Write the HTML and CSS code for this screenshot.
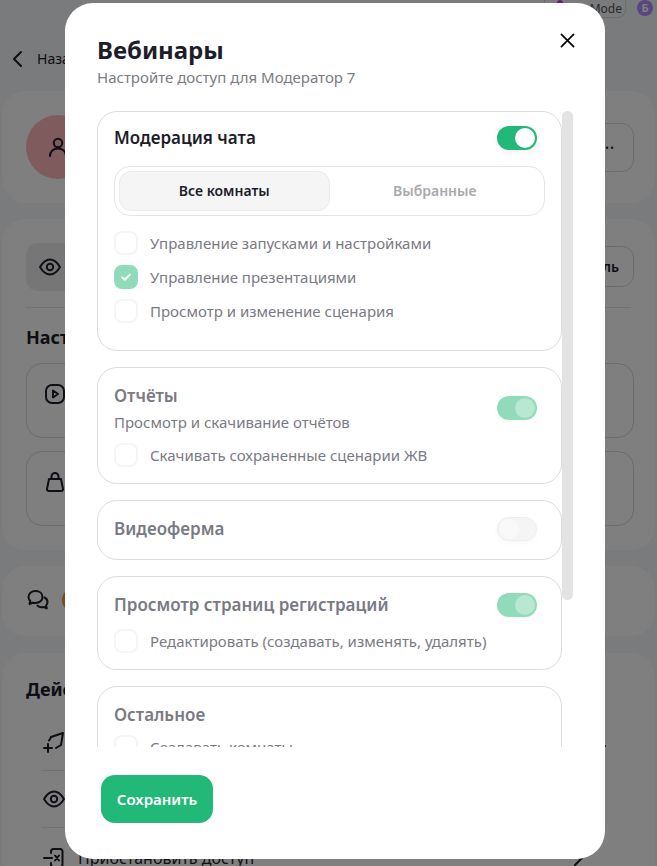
FILE: index.html
```html
<!DOCTYPE html>
<html lang="ru">
<head>
    <meta charset="UTF-8">
    <meta name="viewport" content="width=device-width, initial-scale=1.0">
    <title>Вебинары</title>
    <link rel="stylesheet" href="styles.css">
</head>
<body>
    <!-- Page behind the dialog -->
    <div class="page">
        <div class="topbar">
            <span class="mode-pill"><span class="mode-dot"></span>Mode</span>
            <span class="user-badge">Б</span>
        </div>
        <div class="back-row">
            <svg class="icon" viewBox="0 0 24 24"><path d="M15 5l-7 7 7 7"/></svg>
            <span>Назад</span>
        </div>

        <section class="bg-card bg-card-user">
            <div class="avatar">
                <svg class="icon" viewBox="0 0 24 24"><circle cx="12" cy="8" r="4.2"/><path d="M4 21c0-4.5 3.5-7.5 8-7.5s8 3 8 7.5"/></svg>
            </div>
            <button class="bg-btn bg-btn-more">•••</button>
        </section>

        <section class="bg-card">
            <div class="view-row">
                <div class="icon-tile">
                    <svg class="icon" viewBox="0 0 24 24"><path d="M2 12c3-5 6-7.5 10-7.5S19 7 22 12c-3 5-6 7.5-10 7.5S5 17 2 12z"/><circle cx="12" cy="12" r="3.2"/></svg>
                </div>
                <button class="bg-btn bg-btn-view">Просмотреть как пользователь</button>
            </div>
            <h2 class="bg-title bg-title-access">Настройки доступа</h2>
            <div class="bg-cell">
                <svg class="icon" viewBox="0 0 24 24"><rect x="3" y="3" width="18" height="18" rx="6"/><path d="M10 8.5l5 3.5-5 3.5z"/></svg>
                <span class="cell-dot"></span>
            </div>
            <div class="bg-cell">
                <svg class="icon" viewBox="0 0 24 24"><path d="M6 9h12l2 10c.2 1.2-.6 2-1.6 2H5.600c-1 0-1.800-.8-1.600-2z"/><path d="M8.500 9V6.500a3.500 3.500 0 0 1 7 0V9"/></svg>
                <span class="cell-dot"></span>
            </div>
        </section>

        <section class="bg-card bg-card-chat">
            <svg class="icon" viewBox="0 0 24 24"><path d="M9.500 3C5.500 3 2.500 5.600 2.500 9c0 1.600.7 3 1.800 4l-.8 3 3.300-1.300c.8.300 1.700.4 2.700.4 4 0 7-2.600 7-6.100S13.500 3 9.500 3z"/><path d="M18.500 9.500c1.900 1 3 2.700 3 4.600 0 1.300-.5 2.400-1.400 3.300l.7 3-3.100-1.400c-2.200.6-4.700.1-6.200-1.400"/></svg>
            <span class="chat-mark"></span>
        </section>

        <section class="bg-card bg-card-actions">
            <h2 class="bg-title">Действия</h2>
            <div class="action-row">
                <svg class="icon" viewBox="0 0 24 24"><path d="M9 7l12-4-2 12-5 3"/><path d="M9 7c-.5 1.500-1 2.500-2 3.500"/><path d="M2 18h8M6 14v8"/></svg>
                <span class="action-dash"></span>
            </div>
            <div class="action-row">
                <svg class="icon" viewBox="0 0 24 24"><path d="M2 12c3-5 6-7.500 10-7.500S19 7 22 12c-3 5-6 7.500-10 7.500S5 17 2 12z"/><circle cx="12" cy="12" r="3.200"/></svg>
            </div>
            <div class="action-row action-row-last">
                <svg class="icon" viewBox="0 0 24 24"><path d="M9 7V5.500C9 4 10 3 11.500 3H18c1.500 0 2.500 1 2.500 2.500v13c0 1.500-1 2.500-2.500 2.500h-6.500C10 21 9 20 9 18.500V17"/><path d="M2 12h8"/><path d="M13 9.500l4 5M17 9.500l-4 5"/></svg>
                <span class="action-text">Приостановить доступ</span>
                <svg class="icon action-chevron" viewBox="0 0 24 24"><path d="M9 5l7 7-7 7"/></svg>
            </div>
        </section>
    </div>

    <!-- Dialog -->
    <div class="overlay">
        <div class="modal">
            <button class="close-btn" aria-label="Закрыть">
                <svg viewBox="0 0 16 16"><path d="M1.500 1.500l13 13M14.500 1.500l-13 13"/></svg>
            </button>
            <h1 class="modal-title">Вебинары</h1>
            <p class="modal-subtitle">Настройте доступ для Модератор 7</p>

            <div class="scroll-wrap">
                <div class="perm-list">
                    <div class="perm-card perm-card-main">
                        <div class="perm-head perm-head-tight">
                            <div class="perm-title perm-title-active">Модерация чата</div>
                            <span class="toggle toggle-on"></span>
                        </div>
                        <div class="tabs">
                            <div class="tab tab-active">Все комнаты</div>
                            <div class="tab">Выбранные</div>
                        </div>
                        <div class="checks checks-main">
                            <label class="check-row"><span class="check"></span>Управление запусками и настройками</label>
                            <label class="check-row">
                                <span class="check check-on">
                                    <svg viewBox="0 0 12 12"><path d="M2.200 6.200l2.600 2.500 5-5"/></svg>
                                </span>Управление презентациями
                            </label>
                            <label class="check-row"><span class="check"></span>Просмотр и изменение сценария</label>
                        </div>
                    </div>

                    <div class="perm-card">
                        <div class="perm-head">
                            <div>
                                <div class="perm-title">Отчёты</div>
                                <div class="perm-desc">Просмотр и скачивание отчётов</div>
                            </div>
                            <span class="toggle toggle-soft"></span>
                        </div>
                        <div class="checks checks-close">
                            <label class="check-row"><span class="check"></span>Скачивать сохраненные сценарии ЖВ</label>
                        </div>
                    </div>

                    <div class="perm-card">
                        <div class="perm-head">
                            <div class="perm-title">Видеоферма</div>
                            <span class="toggle toggle-off"></span>
                        </div>
                    </div>

                    <div class="perm-card">
                        <div class="perm-head">
                            <div class="perm-title">Просмотр страниц регистраций</div>
                            <span class="toggle toggle-soft"></span>
                        </div>
                        <div class="checks">
                            <label class="check-row"><span class="check"></span>Редактировать (создавать, изменять, удалять)</label>
                        </div>
                    </div>

                    <div class="perm-card">
                        <div class="perm-head">
                            <div class="perm-title">Остальное</div>
                        </div>
                        <div class="checks checks-tight">
                            <label class="check-row"><span class="check"></span>Создавать комнаты</label>
                        </div>
                    </div>
                </div>
                <div class="scroll-thumb"></div>
            </div>

            <button class="save-btn">Сохранить</button>
        </div>
    </div>
</body>
</html>
```

FILE: styles.css
```css
* {
    box-sizing: border-box;
}

html, body {
    height: 100%;
}

body {
    margin: 0;
    font-family: "Noto Sans", "Open Sans", sans-serif;
    background: #f4f6fa;
    color: #1d1d29;
    overflow: hidden;
}

button {
    font-family: inherit;
}

.icon {
    width: 24px;
    height: 24px;
    fill: none;
    stroke: #1d1d29;
    stroke-width: 2;
    stroke-linecap: round;
    stroke-linejoin: round;
    flex-shrink: 0;
}

/* Page behind the dialog */
.page {
    height: 866px;
    overflow: hidden;
    padding: 0 2px;
}

.topbar {
    height: 18px;
    display: flex;
    justify-content: flex-end;
    align-items: flex-start;
    gap: 11px;
    padding-right: 2px;
}

.mode-pill {
    height: 18px;
    padding: 0 3px 0 12px;
    border: 1px solid #d8d8d8;
    border-top: none;
    border-radius: 0 0 8px 8px;
    display: flex;
    align-items: center;
    font-size: 12px;
    color: #555;
}

.mode-dot {
    width: 6px;
    height: 6px;
    margin: -12px 27px 0 0;
    border-radius: 50%;
    background: #d63fd0;
}

.user-badge {
    width: 16px;
    height: 16px;
    border-radius: 50%;
    background: #b08cff;
    color: #fff;
    font-size: 11px;
    font-weight: 700;
    line-height: 16px;
    text-align: center;
}

.back-row {
    height: 73px;
    padding: 8px 0 0 4px;
    display: flex;
    align-items: center;
    gap: 7px;
    font-size: 14px;
}

.bg-card {
    margin-bottom: 16px;
    padding: 24px;
    background: #fff;
    border-radius: 24px;
}

.bg-card-user {
    height: 112px;
    display: flex;
    justify-content: space-between;
}

.avatar {
    width: 64px;
    height: 64px;
    border-radius: 50%;
    background: #ffb6bd;
    display: flex;
    align-items: center;
    justify-content: center;
}

.bg-btn {
    background: #fff;
    border: 1px solid #d8d8d8;
    border-radius: 12px;
    color: #1d1d29;
    font-size: 14px;
    font-weight: 600;
}

.bg-btn-more {
    width: 52px;
    height: 49px;
    margin: 8px -3px 0 0;
    padding: 0;
    font-size: 8px;
    letter-spacing: 2px;
}

.view-row {
    display: flex;
    justify-content: space-between;
    padding-bottom: 16px;
    border-bottom: 1px solid #e5e5e5;
}

.icon-tile {
    width: 48px;
    height: 48px;
    border-radius: 12px;
    background: #ededed;
    display: flex;
    align-items: center;
    justify-content: center;
}

.bg-btn-view {
    height: 41px;
    margin: 3px -3px 0 0;
    padding: 0 14px;
}

.bg-title {
    margin: 0;
    font-size: 18px;
    font-weight: 700;
    line-height: 26px;
}

.bg-title-access {
    margin: 16px 0 13px;
}

.bg-cell {
    height: 75px;
    margin: 0 -3px 13px 0;
    padding: 18px 28px 0 16px;
    border: 1px solid #d8d8d8;
    border-radius: 16px;
    display: flex;
    justify-content: space-between;
}

.bg-cell:last-child {
    margin-bottom: 0;
}

.cell-dot {
    width: 2px;
    height: 2px;
    margin-top: 18px;
    background: #1d1d29;
}

.bg-card-chat {
    height: 70px;
    margin-bottom: 17px;
    padding: 22px 24px;
    display: flex;
    gap: 12px;
}

.chat-mark {
    width: 24px;
    height: 24px;
    border-radius: 50%;
    background: #f59a2a;
}

.bg-card-actions {
    height: 300px;
    padding-top: 23px;
    margin-bottom: 0;
}

.action-row {
    height: 57px;
    margin: 0 35px 0 16px;
    display: flex;
    align-items: center;
    gap: 12px;
    border-bottom: 1px solid #e5e5e5;
}

.bg-title + .action-row {
    margin-top: 12px;
}

.action-row-last {
    border-bottom: none;
    padding-top: 3px;
}

.action-dash {
    width: 4px;
    height: 2px;
    margin: 8px -10px 0 auto;
    background: #555;
}

.action-text {
    font-size: 16px;
}

.action-chevron {
    margin: 0 6px 0 auto;
}

/* Dialog */
.overlay {
    position: fixed;
    inset: 0;
    padding: 3px 52px 7px 65px;
    background: rgba(0, 0, 0, 0.5);
}

.modal {
    position: relative;
    width: 540px;
    height: 856px;
    padding: 32px 32px 0;
    background: #fff;
    border-radius: 28px;
}

.close-btn {
    position: absolute;
    top: 30px;
    right: 30px;
    width: 15px;
    height: 15px;
    padding: 0;
    border: none;
    background: none;
}

.close-btn svg {
    display: block;
    width: 15px;
    height: 15px;
    fill: none;
    stroke: #000;
    stroke-width: 1.800;
    stroke-linecap: round;
}

.modal-title {
    margin: 0;
    font-size: 24px;
    font-weight: 700;
    line-height: 30px;
}

.modal-subtitle {
    margin: 0;
    font-size: 15px;
    line-height: 24px;
    color: #7b7b84;
}

.scroll-wrap {
    height: 636px;
    margin-top: 22px;
    display: flex;
    overflow: hidden;
}

.perm-list {
    width: 465px;
    display: flex;
    flex-direction: column;
    gap: 16px;
    flex-shrink: 0;
}

.scroll-thumb {
    width: 11px;
    height: 489px;
    border-radius: 6px;
    background: #e3e3e3;
}

.perm-card {
    padding: 14px 16px 16px;
    border: 1px solid #dcdcdc;
    border-radius: 20px;
    flex-shrink: 0;
}

.perm-card-main {
    padding-bottom: 27px;
}

.perm-head {
    display: flex;
    align-items: center;
    justify-content: space-between;
    padding-right: 8px;
}

.perm-title {
    font-size: 17px;
    font-weight: 600;
    line-height: 28px;
    color: #7a7a84;
}

.perm-title-active {
    color: #1d1d29;
}

.perm-head-tight .perm-title {
    line-height: 24px;
}

.perm-desc {
    font-size: 15px;
    line-height: 24px;
    color: #7a7a84;
}

/* Toggle */
.toggle {
    position: relative;
    width: 40px;
    height: 24px;
    border-radius: 12px;
    flex-shrink: 0;
}

.toggle::after {
    content: "";
    position: absolute;
    top: 2px;
    right: 2px;
    width: 20px;
    height: 20px;
    border-radius: 50%;
    background: #fff;
}

.toggle-on {
    background: #22b978;
    box-shadow: 0 2px 6px rgba(0, 0, 0, 0.06);
}

.toggle-soft {
    background: #90dcba;
    box-shadow: 0 2px 6px rgba(0, 0, 0, 0.03);
}

.toggle-soft::after {
    background: #b9e8d2;
}

.toggle-off {
    background: #f5f5f5;
    border: 1px solid #eeeeee;
    box-shadow: 0 2px 6px rgba(0, 0, 0, 0.03);
}

.toggle-off::after {
    top: 1px;
    right: auto;
    left: 1px;
    background: #f9f9f9;
}

/* Room tabs */
.tabs {
    margin-top: 16px;
    padding: 4px;
    border: 1px solid #e6e6e6;
    border-radius: 16px;
    display: flex;
}

.tab {
    flex: 1;
    height: 40px;
    border: 1px solid transparent;
    border-radius: 12px;
    font-size: 14px;
    font-weight: 600;
    line-height: 38px;
    text-align: center;
    color: #a9a9ae;
}

.tab-active {
    background: #f5f5f5;
    border-color: #ebebeb;
    color: #1d1d29;
}

/* Checkbox rows */
.checks {
    margin-top: 10px;
    display: flex;
    flex-direction: column;
    gap: 10px;
}

.checks-main {
    margin-top: 15px;
}

.checks-close {
    margin-top: 9px;
}

.checks-tight {
    margin-top: 6px;
}

.check-row {
    display: flex;
    align-items: center;
    gap: 12px;
    height: 24px;
    font-size: 15px;
    color: #7a7a84;
}

.check {
    width: 24px;
    height: 24px;
    border: 2px solid #f5f5f5;
    border-radius: 8px;
    background: #fff;
    display: flex;
    align-items: center;
    justify-content: center;
    flex-shrink: 0;
}

.check-on {
    background: #90dcba;
    border-color: #90dcba;
}

.check-on svg {
    width: 12px;
    height: 12px;
    fill: none;
    stroke: #fff;
    stroke-width: 2;
    stroke-linecap: round;
    stroke-linejoin: round;
}

.save-btn {
    display: block;
    width: 112px;
    height: 48px;
    margin: 28px 0 0 4px;
    border: none;
    border-radius: 14px;
    background: #22b978;
    color: #fff;
    font-size: 15px;
    font-weight: 600;
}
```
